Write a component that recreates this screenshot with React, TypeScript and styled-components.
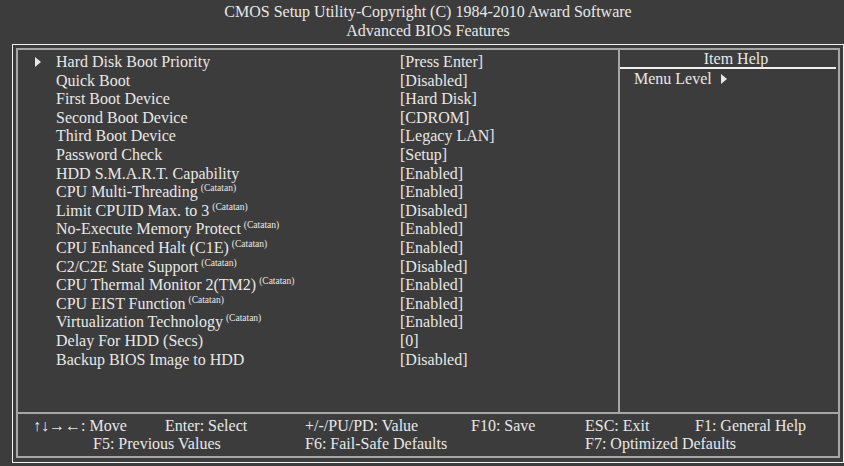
import React from "react";
import styled, { createGlobalStyle } from "styled-components";

const Global = createGlobalStyle`
  html, body { margin: 0; padding: 0; background: #3c3c3c; overflow: hidden; }
  body { font-family: "Liberation Serif", "Times New Roman", serif; color: #e8e8e8; }
`;

const Screen = styled.div`
  width: 844px;
  height: 466px;
  background: #3c3c3c;
  overflow: hidden;
  font-size: 16px;
`;

const Title = styled.div`
  height: 44px;
  padding-left: 12px;
  padding-top: 2px;
  box-sizing: border-box;
  text-align: center;
  line-height: 19px;
`;

const Outer = styled.div`
  margin-left: 12px;
  width: 832px;
  height: 419px;
  box-sizing: border-box;
  border: 1px solid #f0f0f0;
  padding: 3px 3px 4px 3px;
`;

const Inner = styled.div`
  width: 824px;
  height: 410px;
  box-sizing: border-box;
  border: 2px solid #a6a6a6;
  display: flex;
  flex-direction: column;
`;

const Main = styled.div`
  flex: 1;
  display: grid;
  grid-template-columns: 602px 1fr;
  border-bottom: 2px solid #a6a6a6;
`;

const List = styled.div`
  padding-top: 3px;
  padding-left: 17px;
  border-right: 2px solid #a6a6a6;
`;

const Row = styled.div`
  display: grid;
  grid-template-columns: 21px 344px 1fr;
  height: 18.6px;
  line-height: 18.6px;
  white-space: nowrap;
`;

const Marker = styled.span`
  display: flex;
  align-items: center;
`;

const Sup = styled.sup`
  font-size: 9.5px;
  vertical-align: 0;
  position: relative;
  top: -6px;
  margin-left: 3px;
`;

const Help = styled.div`
  display: flex;
  flex-direction: column;
`;

const HelpTitle = styled.div`
  height: 17px;
  line-height: 17px;
  text-align: center;
  padding-left: 16px;
  border-bottom: 2px solid #f0f0f0;
  margin-right: 2px;
`;

const HelpLine = styled.div`
  padding-left: 14px;
  line-height: 19px;
  display: flex;
  align-items: center;
  gap: 9px;
`;

const Footer = styled.div`
  height: 42px;
  padding: 3px 0 0 15px;
  box-sizing: border-box;
  display: grid;
  grid-template-columns: 60px 72px 140px 166px 114px 110px 1fr;
  grid-auto-rows: 18px;
  line-height: 18px;
  white-space: nowrap;
`;

const Key = styled.span<{ $col: number; $span?: number }>`
  grid-column: ${(p) => p.$col} / span ${(p) => p.$span ?? 1};
`;

const Tri = () => (
  <svg width={6} height={10} viewBox="0 0 6 10">
    <polygon points="0,0 6,5 0,10" fill="#e8e8e8" />
  </svg>
);

type Item = { label: string; value: string; sup?: boolean; sub?: boolean };

const items: Item[] = [
  { label: "Hard Disk Boot Priority", value: "[Press Enter]", sub: true },
  { label: "Quick Boot", value: "[Disabled]" },
  { label: "First Boot Device", value: "[Hard Disk]" },
  { label: "Second Boot Device", value: "[CDROM]" },
  { label: "Third Boot Device", value: "[Legacy LAN]" },
  { label: "Password Check", value: "[Setup]" },
  { label: "HDD S.M.A.R.T. Capability", value: "[Enabled]" },
  { label: "CPU Multi-Threading", value: "[Enabled]", sup: true },
  { label: "Limit CPUID Max. to 3", value: "[Disabled]", sup: true },
  { label: "No-Execute Memory Protect", value: "[Enabled]", sup: true },
  { label: "CPU Enhanced Halt (C1E)", value: "[Enabled]", sup: true },
  { label: "C2/C2E State Support", value: "[Disabled]", sup: true },
  { label: "CPU Thermal Monitor 2(TM2)", value: "[Enabled]", sup: true },
  { label: "CPU EIST Function", value: "[Enabled]", sup: true },
  { label: "Virtualization Technology", value: "[Enabled]", sup: true },
  { label: "Delay For HDD (Secs)", value: "[0]" },
  { label: "Backup BIOS Image to HDD", value: "[Disabled]" },
];

export default function App() {
  return (
    <Screen>
      <Global />
      <Title>
        CMOS Setup Utility-Copyright (C) 1984-2010 Award Software
        <br />
        Advanced BIOS Features
      </Title>
      <Outer>
        <Inner>
          <Main>
            <List>
              {items.map((it) => (
                <Row key={it.label}>
                  <Marker>{it.sub ? <Tri /> : null}</Marker>
                  <span>
                    {it.label}
                    {it.sup ? <Sup>(Catatan)</Sup> : null}
                  </span>
                  <span>{it.value}</span>
                </Row>
              ))}
            </List>
            <Help>
              <HelpTitle>Item Help</HelpTitle>
              <HelpLine>
                <span>Menu Level</span>
                <Tri />
              </HelpLine>
            </Help>
          </Main>
          <Footer>
            <Key $col={1} $span={2}>↑↓→←: Move</Key>
            <Key $col={3}>Enter: Select</Key>
            <Key $col={4}>+/-/PU/PD: Value</Key>
            <Key $col={5}>F10: Save</Key>
            <Key $col={6}>ESC: Exit</Key>
            <Key $col={7}>F1: General Help</Key>
            <Key $col={2} $span={2}>F5: Previous Values</Key>
            <Key $col={4}>F6: Fail-Safe Defaults</Key>
            <Key $col={6} $span={2}>F7: Optimized Defaults</Key>
          </Footer>
        </Inner>
      </Outer>
    </Screen>
  );
}
